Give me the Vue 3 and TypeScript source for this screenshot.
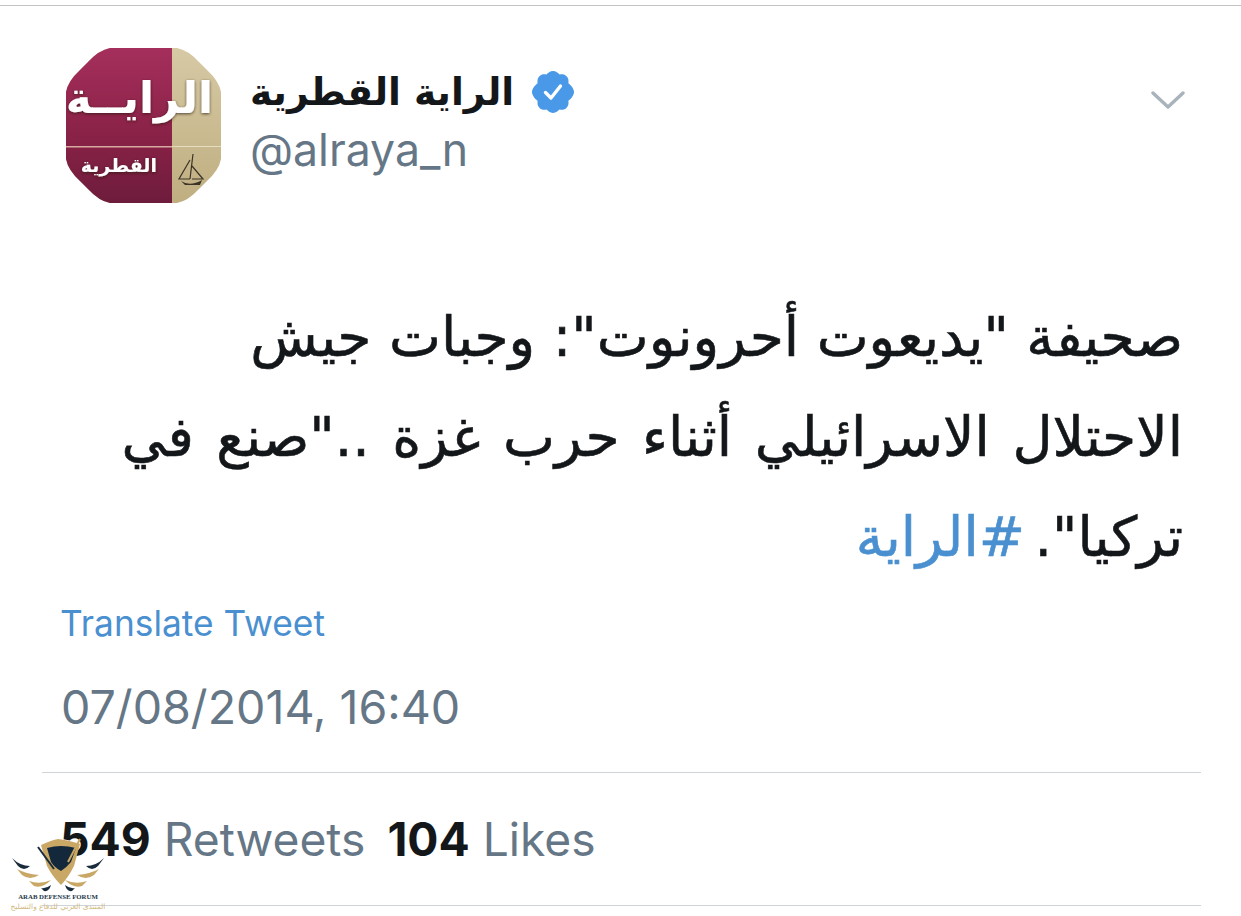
<template>
  <main class="tweet">
    <header class="head">
      <svg class="avatar" viewBox="0 0 155 155" role="img" aria-label="الراية القطرية">
        <defs>
          <clipPath id="round">
            <path d="M44 0H111Q122 2 133 14L141 22Q153 33 155 44V111Q153 122 141 133L133 141Q122 153 111 155H44Q33 153 22 141L14 133Q2 122 0 111V44Q2 33 14 22L22 14Q33 2 44 0Z" />
          </clipPath>
          <linearGradient id="maroon" x1="0" y1="0" x2="0" y2="1">
            <stop offset="0" stop-color="#a52f5c" />
            <stop offset="0.55" stop-color="#8a2247" />
            <stop offset="1" stop-color="#6e1c3c" />
          </linearGradient>
          <linearGradient id="sand" x1="0" y1="0" x2="0" y2="1">
            <stop offset="0" stop-color="#d6c9a4" />
            <stop offset="1" stop-color="#bfae80" />
          </linearGradient>
          <filter id="soft" x="-10%" y="-20%" width="120%" height="140%">
            <feDropShadow dx="0" dy="1" stdDeviation="1.6" flood-color="#2a1a14" flood-opacity="0.75" />
          </filter>
        </defs>
        <g clip-path="url(#round)">
          <rect width="155" height="155" fill="url(#sand)" />
          <rect width="106" height="155" fill="url(#maroon)" />
          <rect y="98" width="106" height="1.5" fill="#d8a9a0" />
          <rect x="106" y="98" width="49" height="1" fill="#e6dcc0" />
          <path d="M115 133Q124 139 136 132L134 137H119Z" fill="#3a3428" />
          <path d="M127 106L124 131M124 112L113 131H124M126 118L137 131H126" fill="none" stroke="#3a3428" stroke-width="1.2" />
        </g>
        <text class="logo-big" x="147" y="65" direction="rtl" filter="url(#soft)">الرايــة</text>
        <text class="logo-small" x="91" y="124" direction="rtl" filter="url(#soft)">القطرية</text>
      </svg>
      <div class="who">
        <div class="name-row">
          <span class="name" dir="rtl">الراية القطرية</span>
          <svg class="badge" viewBox="0 0 44 44" aria-hidden="true">
            <path fill="#4a98e8" d="M22 1c3 0 5 2 6.6 3.4 2.6-.6 5.400-.2 7 1.800 1.800 1.600 2.200 4.400 1.800 7C39.800 15 43 18.500 43 22s-3.200 7-5.600 8.800c.4 2.600 0 5.400-1.800 7-1.600 2-4.400 2.400-7 1.800C27 41 25 43 22 43s-5-2-6.600-3.400c-2.600.6-5.400.2-7-1.800-1.800-1.600-2.200-4.400-1.800-7C4.200 29 1 25.500 1 22s3.200-7 5.600-8.800c-.4-2.600 0-5.400 1.800-7 1.600-2 4.400-2.400 7-1.800C17 3 19 1 22 1z" />
            <path d="M14.500 22.500l5.500 5.500 9.500-12" fill="none" stroke="#fff" stroke-width="3.400" stroke-linecap="round" stroke-linejoin="round" />
          </svg>
        </div>
        <div class="handle">@alraya_n</div>
      </div>
      <svg class="chevron" viewBox="0 0 34 20" aria-hidden="true">
        <path d="M2 3l15 14L32 3" fill="none" stroke="#a9b3bb" stroke-width="3.400" stroke-linecap="round" stroke-linejoin="round" />
      </svg>
    </header>

    <div class="body" dir="rtl">
      <p>صحيفة "يديعوت أحرونوت": وجبات جيش</p>
      <p class="wide">الاحتلال الاسرائيلي أثناء حرب غزة .."صنع في</p>
      <p class="tight">تركيا". <a>#الراية</a></p>
    </div>

    <a class="translate">Translate Tweet</a>
    <time class="stamp">07/08/2014, 16:40</time>

    <div class="counts">
      <span><b>549</b> Retweets</span>
      <span><b>104</b> Likes</span>
    </div>

    <div class="mark" aria-label="Arab Defense Forum">
      <svg class="mark-art" viewBox="0 0 100 58" aria-hidden="true">
        <path d="M33 7Q44 2 50 1Q60 2 72 6L66 28Q60 40 53 47Q44 38 39 28Z" fill="#c9a866" />
        <path d="M39 10Q46 8 53 8Q60 8 68 10L63 24Q58 30 53 33Q47 30 43 24Z" fill="#13283a" />
        <path d="M72 1L60 24" stroke="#c9a866" stroke-width="2" />
        <path d="M30 9L46 31" stroke="#1a2c3c" stroke-width="2" />
        <path d="M4 20Q12 28 22 28Q16 34 10 28Z" fill="#1a2c3c" />
        <path d="M9 31Q18 36 31 37Q22 43 14 37Z" fill="#c9a866" />
        <path d="M21 43Q32 47 43 42Q34 51 26 48Z" fill="#c9a866" />
        <path d="M33 50Q38 51 43 47Q41 54 36 53Z" fill="#1a2c3c" />
        <path d="M96 20Q88 28 78 28Q84 34 90 28Z" fill="#1a2c3c" />
        <path d="M91 31Q82 36 69 37Q78 43 86 37Z" fill="#c9a866" />
        <path d="M79 43Q68 47 57 42Q66 51 74 48Z" fill="#c9a866" />
        <path d="M67 50Q62 51 57 47Q59 54 64 53Z" fill="#1a2c3c" />
      </svg>
      <div class="mark-en">ARAB DEFENSE FORUM</div>
      <div class="mark-ar" dir="rtl">المنتدى العربي للدفاع والتسليح</div>
    </div>
  </main>
</template>

<script setup lang="ts">
// static screenshot, no state needed
</script>

<style>
html,
body {
  background: #fff;
}
</style>

<style scoped>
.tweet {
  position: relative;
  width: 1241px;
  height: 916px;
  box-sizing: border-box;
  overflow: hidden;
  background: #fff;
  padding-top: 5px;
  font-family: Inter, "Liberation Sans", sans-serif;
  display: flex;
  flex-direction: column;
}

.tweet::before {
  content: "";
  height: 1px;
  background: #c4c4c4;
  flex: none;
}

.head {
  display: flex;
  align-items: flex-start;
  padding: 42px 56px 0 66px;
  height: 160px;
  flex: none;
}

.avatar {
  width: 155px;
  height: 155px;
  flex: none;
}

.logo-big {
  font-family: "DejaVu Sans", sans-serif;
  font-weight: 700;
  font-size: 44px;
  fill: #fff;
}

.logo-small {
  font-family: "DejaVu Sans", sans-serif;
  font-weight: 700;
  font-size: 19px;
  fill: #fff;
}

.who {
  margin-left: 29px;
  flex: 1;
}

.name-row {
  display: flex;
  align-items: center;
  gap: 18px;
  height: 72px;
  margin-top: 8px;
}

.name {
  font-family: "DejaVu Sans", sans-serif;
  font-size: 37.6px;
  font-weight: 700;
  color: #14171a;
  line-height: 72px;
}

.badge {
  width: 44px;
  height: 44px;
  margin-left: -1px;
}

.handle {
  font-size: 44.6px;
  line-height: 52px;
  color: #657786;
  margin-top: -4px;
}

.chevron {
  width: 34px;
  height: 20px;
  margin-top: 42px;
  flex: none;
}

.body {
  margin-top: 79px;
  padding: 0 58px;
  font-family: "DejaVu Sans", sans-serif;
  font-size: 55.2px;
  line-height: 100px;
  color: #14171a;
  -webkit-text-stroke: 0.6px currentColor;
  flex: none;
}

.body p {
  margin: 0;
  white-space: nowrap;
}

.body .wide {
  word-spacing: 5px;
}

.body .tight {
  word-spacing: -8px;
}

.body a {
  color: #4a90d0;
}

.translate {
  margin: 15px 0 0 60px;
  font-size: 35.3px;
  line-height: 44px;
  color: #4a90d0;
  flex: none;
}

.stamp {
  margin: 35px 0 0 61px;
  font-size: 46.6px;
  line-height: 52px;
  color: #657786;
  flex: none;
}

.counts {
  margin: 39px 40px 0 42px;
  border-top: 1px solid #cfd4d8;
  border-bottom: 1px solid #cfd4d8;
  height: 134px;
  padding: 40px 0 0 18px;
  box-sizing: border-box;
  display: flex;
  gap: 22px;
  font-size: 46.2px;
  line-height: 52px;
  color: #657786;
  flex: none;
}

.counts b {
  color: #14171a;
  font-weight: 700;
}

.mark {
  position: absolute;
  left: 8px;
  top: 838px;
  width: 100px;
  text-align: center;
}

.mark-art {
  display: block;
  width: 100px;
  height: 58px;
}

.mark-en {
  margin-top: -4px;
  font-family: "Liberation Serif", serif;
  font-weight: 700;
  font-size: 6.8px;
  line-height: 9px;
  color: #26384a;
  white-space: nowrap;
}

.mark-ar {
  margin-top: 1px;
  font-family: "DejaVu Sans", sans-serif;
  font-size: 7.4px;
  line-height: 10px;
  color: #d2b97f;
  white-space: nowrap;
}
</style>
